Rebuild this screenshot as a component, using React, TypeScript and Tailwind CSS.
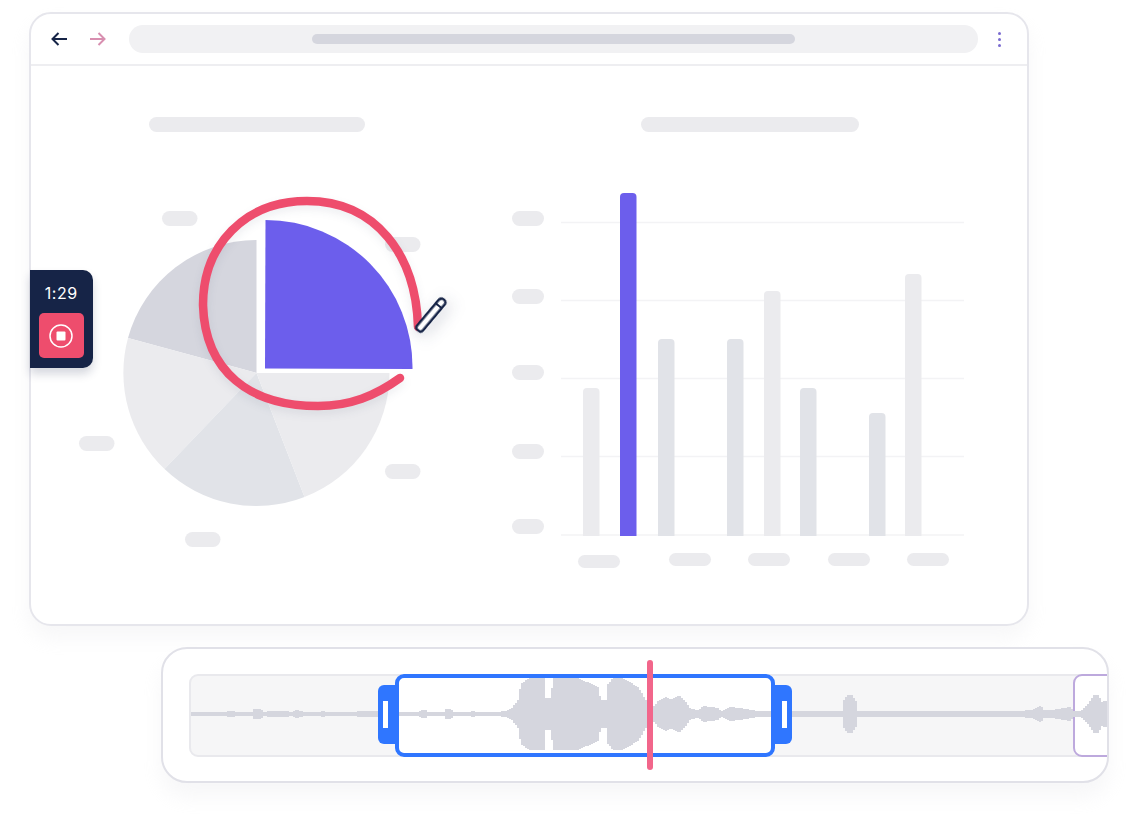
const LIGHT = "#ebebee";
const DARK = "#e1e3e8";
const GREY = "#d5d6de";
const RED = "#ee4d6d";
const NAVY = "#162447";
const PURPLE = "#6c5eec";

const wave: [number, number][] = [
  [191, 2], [226, 2], [228, 3], [232, 3], [234, 2], [252, 2], [253, 5], [260, 5], [262, 2], [270, 3], [285, 3], [290, 2],
  [295, 4], [300, 3], [305, 2], [320, 2], [322, 3], [326, 2], [355, 2], [356, 3], [372, 3], [378, 3], [395, 2], [418, 2],
  [420, 4], [425, 4], [427, 2], [443, 2], [445, 5], [450, 5], [452, 2], [470, 2], [472, 4], [474, 2], [496, 2], [505, 3], [510, 5],
  [514, 10], [517, 14], [520, 30], [524, 33], [530, 36], [543, 36], [544, 16], [550, 16], [552, 36], [577, 36], [597, 27], [600, 14],
  [605, 14], [607, 30], [612, 36], [622, 36], [637, 27], [645, 14], [653, 8], [658, 14], [665, 17], [670, 14], [678, 19], [685, 12],
  [690, 5], [697, 4], [703, 8], [717, 6], [720, 3], [730, 7], [745, 5], [757, 3], [841, 3], [843, 14], [847, 19], [851, 19], [855, 13],
  [856, 3], [1017, 3], [1030, 4], [1040, 8], [1043, 4], [1050, 4], [1070, 7], [1072, 3], [1080, 3], [1087, 10], [1093, 19], [1098, 19],
  [1100, 12], [1108, 14], [1110, 14],
];

function wavePath() {
  const at = (x: number) => {
    for (let i = 0; i < wave.length - 1; i++) {
      if (x >= wave[i][0] && x <= wave[i + 1][0]) {
        const t = (x - wave[i][0]) / (wave[i + 1][0] - wave[i][0] || 1);
        return wave[i][1] + (wave[i + 1][1] - wave[i][1]) * t;
      }
    }
    return 2;
  };
  const top: string[] = [];
  const bottom: string[] = [];
  for (let x = 191; x < 1110; x += 2) {
    const h = Math.round(at(x));
    top.push(`L${x} ${714 - h} L${x + 2} ${714 - h}`);
    bottom.unshift(`L${x + 2} ${714 + h} L${x} ${714 + h}`);
  }
  return `M191 714 ${top.join(" ")} ${bottom.join(" ")} Z`;
}

function Pie() {
  const pills = [[162, 211], [385, 237], [79, 436], [385, 464], [185, 532]];
  return (
    <svg viewBox="31 190 440 370" width={440} height={370} className="block overflow-visible">
      {pills.map(([x, y]) => (
        <rect key={`${x}-${y}`} x={x} y={y} width={35.5} height={15} rx={7.5} fill={LIGHT} />
      ))}
      <path d="M256.5 373 L256.5 240 A133 133 0 0 0 128 338 Z" fill={GREY} />
      <path d="M256.5 373 L128 338 A133 133 0 0 0 164.5 469 Z" fill={LIGHT} />
      <path d="M256.5 373 L164.5 469 A133 133 0 0 0 304.5 497 Z" fill={DARK} />
      <path d="M256.5 373 L304.5 497 A133 133 0 0 0 389.5 373 Z" fill={LIGHT} />
      <path d="M265 368.5 L265.5 220 A147 147 0 0 1 412.5 369 Z" fill={PURPLE} />
      <path d="M257 373 L412 373 L412 369 L265 369 L265 220 L257 220 Z" fill="#ffffff" />
      <path
        d="M418 327 C416 255 376 201 307 201 C245 201 203 245 203 305 C205 372 250 406 318 406 C350 406 375 396 400 378"
        fill="none"
        stroke={RED}
        strokeWidth={8.5}
        strokeLinecap="round"
        className="drop-shadow-[0_4px_4px_rgba(22,36,71,0.08)]"
      />
      <g transform="translate(417.5 331) rotate(-50)" className="drop-shadow-[0_5px_8px_rgba(22,36,71,0.18)]">
        <path
          d="M1 1.5 L1 -1.5 Q1 -3.6 4 -3.8 L37 -3.8 Q41 -3.8 41 0 Q41 3.8 37 3.8 L4 3.8 Q1 3.6 1 1.5 Z"
          fill="#ffffff"
          stroke={NAVY}
          strokeWidth={2.4}
          strokeLinejoin="round"
        />
        <path d="M33 -3.6 L33 3.6" stroke={NAVY} strokeWidth={2} />
      </g>
    </svg>
  );
}

function Bars() {
  const ys = [222.5, 300.5, 378.5, 456.5, 535];
  const yPills = [211, 289, 365, 444, 519];
  const bars = [
    [583, 388, LIGHT], [620, 193, PURPLE], [658, 339, DARK], [727, 339, DARK],
    [764, 291, LIGHT], [800, 388, DARK], [869, 413, DARK], [905, 274, LIGHT],
  ] as [number, number, string][];
  const xPills = [[578, 555], [669, 553], [748, 553], [828, 553], [907, 553]];
  return (
    <svg viewBox="500 180 480 400" width={480} height={400} className="block overflow-visible">
      {ys.map((y) => (
        <rect key={y} x={561} y={y - 0.75} width={403} height={1.5} fill="#f3f3f5" />
      ))}
      {yPills.map((y) => (
        <rect key={y} x={512} y={y} width={32} height={15} rx={7.5} fill={LIGHT} />
      ))}
      {bars.map(([x, top, c]) => (
        <path
          key={x}
          d={`M${x} 536 L${x} ${top + 4} Q${x} ${top} ${x + 4} ${top} L${x + 12.5} ${top} Q${x + 16.5} ${top} ${x + 16.5} ${top + 4} L${x + 16.5} 536 Z`}
          fill={c}
        />
      ))}
      {xPills.map(([x, y]) => (
        <rect key={x} x={x} y={y} width={42} height={13} rx={6.5} fill={LIGHT} />
      ))}
    </svg>
  );
}

export default function App() {
  return (
    <div className="relative w-[1139px] h-[828px] bg-white overflow-hidden pl-[29px] pt-[12px] font-['Inter',sans-serif]">
      <div className="w-[1000px] h-[614px] bg-white border-2 border-[#e6e6ec] rounded-[22px] shadow-[0_12px_20px_rgba(213,214,222,0.2)]">
        <div className="h-[52px] border-b-2 border-[#eeeef1] flex items-center pl-[20px] pr-[24px]">
          <svg width="16" height="14" viewBox="0 0 16 14" fill="none" className="block">
            <path d="M16 7H1.5M7.5 1L1.5 7L7.5 13" stroke={NAVY} strokeWidth="2" />
          </svg>
          <svg width="16" height="14" viewBox="0 0 16 14" fill="none" className="block ml-[23px]">
            <path d="M0 7H14.5M8.5 1L14.5 7L8.5 13" stroke="#d88fb0" strokeWidth="2" />
          </svg>
          <div className="ml-[23px] w-[849px] h-[28px] rounded-full bg-[#f1f1f3] flex items-center pl-[183px]">
            <div className="w-[483px] h-[10px] rounded-full bg-[#d5d6de]" />
          </div>
          <div className="ml-[20px] flex flex-col gap-[3px]">
            <div className="w-[3px] h-[3px] rounded-full bg-[#7a6bd0]" />
            <div className="w-[3px] h-[3px] rounded-full bg-[#7a6bd0]" />
            <div className="w-[3px] h-[3px] rounded-full bg-[#7a6bd0]" />
          </div>
        </div>
        <div className="flex">
          <div className="w-[469px] pt-[51px]">
            <div className="ml-[118px] w-[216px] h-[15px] rounded-full bg-[#ebebee]" />
            <div className="mt-[58px]">
              <Pie />
            </div>
          </div>
          <div className="w-[480px] pt-[51px]">
            <div className="ml-[141px] w-[218px] h-[15px] rounded-full bg-[#ebebee]" />
            <div className="mt-[48px]">
              <Bars />
            </div>
          </div>
        </div>
      </div>

      <div className="absolute left-[30px] top-[270px] w-[62.5px] h-[98px] bg-[#162447] rounded-r-[10px] flex flex-col items-center shadow-[0_6px_10px_rgba(22,36,71,0.18)]">
        <div className="mt-[14px] h-[18px] text-[16px] leading-[18px] tracking-[0.6px] text-white">1:29</div>
        <div className="mt-[11px] w-[45px] h-[45px] rounded-[5px] bg-[#ee4d6d] flex items-center justify-center">
          <svg width="26" height="26" viewBox="0 0 26 26" fill="none" className="block">
            <circle cx="13" cy="13" r="11" stroke="#ffffff" strokeWidth="1.5" />
            <rect x="8.5" y="8.5" width="9" height="9" rx="1" fill="#ffffff" />
          </svg>
        </div>
      </div>

      <div className="relative ml-[132px] mt-[21px] w-[948px] h-[136px] bg-white border-2 border-[#e1e1e8] rounded-[26px] shadow-[0_14px_20px_rgba(213,214,222,0.2)]">
        <div className="absolute inset-0 overflow-hidden rounded-[24px]">
          <div className="ml-[26px] mt-[25px] w-[960px] h-[83px] bg-[#f6f6f7] border-2 border-[#e9e9ed] rounded-[9px]" />
          <div className="absolute left-[910px] top-[25px] w-[60px] h-[83px] bg-white border-2 border-[#bda9dd] rounded-[9px]" />
          <div className="absolute left-[232px] top-[25px] w-[380px] h-[83px] bg-white rounded-[9px]" />
          <svg viewBox="163 649 946 132" width={946} height={132} className="absolute left-0 top-0 block">
            <path d={wavePath()} fill={GREY} shapeRendering="crispEdges" />
          </svg>
        </div>
        <div className="absolute left-[215px] top-[36px] w-[20px] h-[59px] bg-[#2f76ff] rounded-l-[6px] flex items-center pl-[5px]">
          <div className="w-[5px] h-[27px] bg-white" />
        </div>
        <div className="absolute left-[610px] top-[36px] w-[19px] h-[59px] bg-[#2f76ff] rounded-r-[6px] flex items-center justify-end pr-[5px]">
          <div className="w-[5px] h-[27px] bg-white" />
        </div>
        <div className="absolute left-[232px] top-[25px] w-[380px] h-[83px] border-[4px] border-[#2f76ff] rounded-[9px]" />
        <div className="absolute left-[484px] top-[11px] w-[6px] h-[110px] rounded-full bg-[#f2668b]" />
      </div>
    </div>
  );
}
